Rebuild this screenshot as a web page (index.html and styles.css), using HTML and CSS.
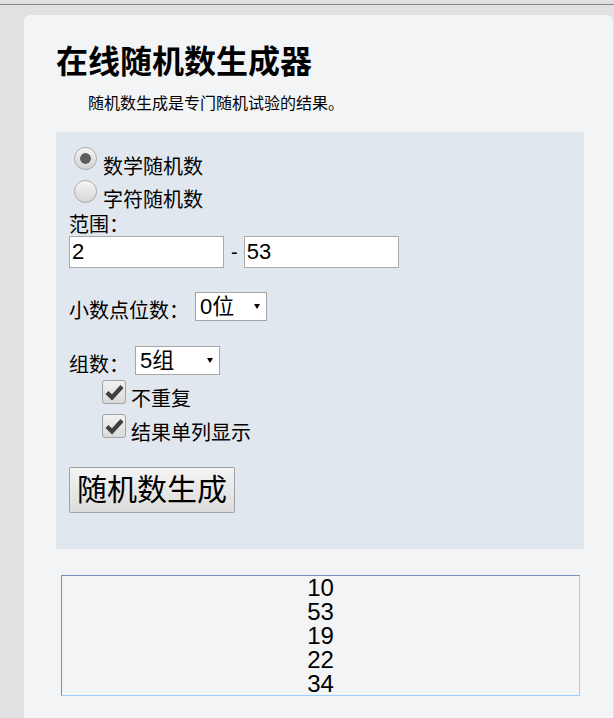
FILE: index.html
```html
<!DOCTYPE html>
<html lang="zh-CN">
<head>
<meta charset="utf-8">
<title>在线随机数生成器</title>
<link rel="stylesheet" href="styles.css">
</head>
<body>
<div class="topbar"></div>
<main class="card">
  <h1 class="title">在线随机数生成器</h1>
  <p class="intro">随机数生成是专门随机试验的结果。</p>
  <form class="panel">
    <label class="radio-row"><input type="radio" name="kind" class="radio" checked><span class="opt-text">数学随机数</span></label>
    <label class="radio-row"><input type="radio" name="kind" class="radio"><span class="opt-text">字符随机数</span></label>
    <div class="range-label">范围：</div>
    <div class="range">
      <input class="num" type="text" value="2">
      <span class="dash">-</span>
      <input class="num" type="text" value="53">
    </div>
    <div class="field field-decimal">
      <span class="field-label">小数点位数：</span>
      <span class="select select-decimal"><select><option>0位</option><option>1位</option><option>2位</option></select></span>
    </div>
    <div class="field field-groups">
      <span class="field-label">组数：</span>
      <span class="select select-groups"><select><option>5组</option><option>10组</option></select></span>
    </div>
    <label class="check-row">
      <span class="box"><svg viewBox="0 0 24 24" width="24" height="24"><path d="M5 12.5 L10 17.5 L20 6.5" fill="none" stroke="#3f3f3f" stroke-width="4.2"/></svg></span>
      <span class="check-text">不重复</span>
    </label>
    <label class="check-row">
      <span class="box"><svg viewBox="0 0 24 24" width="24" height="24"><path d="M5 12.5 L10 17.5 L20 6.5" fill="none" stroke="#3f3f3f" stroke-width="4.2"/></svg></span>
      <span class="check-text">结果单列显示</span>
    </label>
    <button type="button" class="generate">随机数生成</button>
  </form>
  <div class="result">10<br>53<br>19<br>22<br>34</div>
</main>
</body>
</html>
```

FILE: styles.css
```css
html, body {
  margin: 0;
  padding: 0;
}
body {
  background: #e1e1e3;
  font-family: "Liberation Sans", "Noto Sans CJK SC", sans-serif;
  color: #000;
  overflow: hidden;
}
.topbar {
  height: 4px;
  background: #e0e0e0;
  border-bottom: 1px solid #8a8a8a;
}
.card {
  margin: 10px 1px 0 24px;
  padding: 27px 29px 40px 32px;
  background: #f3f4f6;
  border-radius: 6px 6px 0 0;
  min-height: 700px;
}
.title {
  margin: 0;
  font-size: 32px;
  line-height: 40px;
  font-weight: bold;
}
.intro {
  margin: 10px 0 0;
  font-size: 16px;
  line-height: 24px;
  text-indent: 32px;
}
.panel {
  margin-top: 16px;
  background: #e0e7ef;
  padding: 15px 13px 36px 13px;
  font-size: 20px;
  line-height: 20px;
}
.radio-row {
  display: flex;
  align-items: flex-start;
  height: 33px;
}
.radio {
  appearance: none;
  -webkit-appearance: none;
  margin: 0 6px 0 5px;
  width: 23px;
  height: 23px;
  border-radius: 50%;
  border: 1px solid #a9a9a9;
  background: linear-gradient(#f6f6f6, #d6d6d6);
  box-shadow: inset 0 1px 1px rgba(255,255,255,0.8);
}
.radio:checked {
  background: radial-gradient(circle, #5e5e5e 0, #5e5e5e 5px, transparent 5.6px), linear-gradient(#f2f2f2, #d4d4d4);
}
.opt-text {
  margin-top: 10px;
}
.range-label {
  margin-top: 2px;
}
.range {
  display: flex;
  align-items: center;
  margin-top: 1px;
}
.num {
  box-sizing: border-box;
  width: 155px;
  height: 32px;
  margin: 0;
  padding: 0 2px;
  border: 1px solid #a9a9a9;
  background: #fff;
  font-family: "Liberation Sans", "Noto Sans CJK SC", sans-serif;
  font-size: 22px;
  color: #000;
  outline: none;
}
.dash {
  margin: 0 6px 0 7px;
}
.field {
  display: flex;
  align-items: flex-end;
  gap: 6px;
}
.field-decimal {
  margin-top: 24px;
}
.field-groups {
  margin-top: 25px;
}
.select {
  position: relative;
  display: block;
}
.select select {
  appearance: none;
  -webkit-appearance: none;
  box-sizing: border-box;
  display: block;
  width: 100%;
  height: 29px;
  margin: 0;
  padding: 0 4px;
  border: 1px solid #a6a6a6;
  border-radius: 0;
  background: #fff;
  font-family: "Liberation Sans", "Noto Sans CJK SC", sans-serif;
  font-size: 22px;
  color: #000;
  outline: none;
}
.select::after {
  content: "";
  position: absolute;
  top: 12px;
  right: 7px;
  border-left: 3px solid transparent;
  border-right: 3px solid transparent;
  border-top: 5px solid #000;
  pointer-events: none;
}
.select-decimal {
  width: 72px;
}
.select-groups {
  width: 85px;
}
.check-row {
  display: flex;
  align-items: flex-start;
  height: 34px;
}
.check-row:first-of-type {
  margin-top: 5px;
}
.field-groups + .check-row {
  margin-top: 5px;
}
.box {
  box-sizing: border-box;
  width: 24px;
  height: 24px;
  margin-left: 33px;
  margin-right: 5px;
  border: 1px solid #a4a4a4;
  border-radius: 3px;
  background: linear-gradient(#f2f2f2, #d9d9d9);
  display: flex;
  align-items: center;
  justify-content: center;
}
.box svg {
  display: block;
  flex: none;
  margin: -1px;
}
.check-text {
  margin-top: 9px;
}
.generate {
  display: block;
  box-sizing: border-box;
  margin-top: 19px;
  width: 166px;
  height: 46px;
  padding: 0 7px;
  border: 1px solid #a0a0a0;
  border-radius: 2px;
  background: linear-gradient(#f4f4f4, #dcdcdc);
  font-family: "Liberation Sans", "Noto Sans CJK SC", sans-serif;
  font-size: 30px;
  line-height: 34px;
  color: #000;
}
.result {
  box-sizing: border-box;
  margin: 26px 4px 0 5px;
  height: 121px;
  overflow: hidden;
  border: 1px solid #99ccff;
  border-top-color: #7291b5;
  border-left-color: #7291b5;
  text-align: center;
  font-size: 24px;
  line-height: 24px;
}
```
